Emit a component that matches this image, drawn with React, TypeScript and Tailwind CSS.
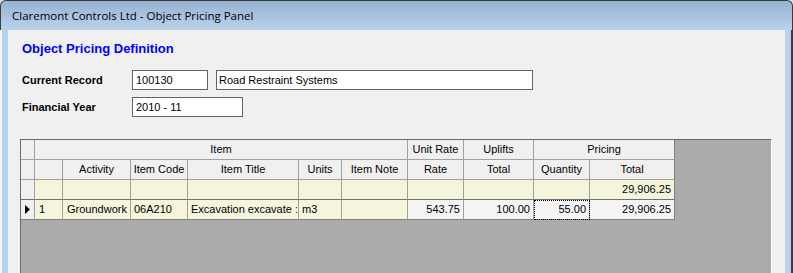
import React from "react";

const cols = "grid-cols-[14px_28px_68px_57px_111px_43px_66px_56px_70px_56px_85px]";

function Cell({
  children,
  className = "",
}: {
  children?: React.ReactNode;
  className?: string;
}) {
  return (
    <div
      className={
        "h-[20px] border-r border-b border-[#a0a0a0] flex items-center overflow-hidden whitespace-nowrap " +
        className
      }
    >
      {children}
    </div>
  );
}

export default function App() {
  const hdr = "bg-[#f0f0f0] justify-center";
  const beige = "bg-[#f5f5dc]";
  const num = "justify-end pr-[3px]";
  return (
    <div
      className="w-[793px] h-[273px] overflow-hidden flex flex-col bg-[#dcdcdc] text-black"
      style={{ fontFamily: '"Liberation Sans", Arial, sans-serif' }}
    >
      {/* title bar */}
      <div className="h-[30px] shrink-0 rounded-t-[6px] border-t border-l border-r border-[#3c3c3c] bg-gradient-to-b from-[#97b3d1] to-[#bad2ec] flex items-center pl-[11px]">
        <span className="text-[11.5px] text-black" style={{ fontFamily: '"Open Sans", "Noto Sans", sans-serif' }}>
          Claremont Controls Ltd - Object Pricing Panel
        </span>
      </div>
      {/* body */}
      <div className="flex flex-1 min-h-0">
        <div className="w-[8px] bg-[#b9d1ea] border-l-2 border-[#eef4fa]" />
        <div className="flex-1 bg-[#f0f0f0] flex flex-col pl-[12px] pr-[13px]">
          <div className="mt-[11px] pl-[2px] h-[16px] leading-[16px] text-[13px] font-bold text-[#0000ff]">
            Object Pricing Definition
          </div>
          <div className="mt-[13px] flex items-center h-[20px]">
            <div className="w-[112px] pl-[2px] text-[11px] font-bold">Current Record</div>
            <div className="w-[76px] h-[20px] border border-[#646464] bg-white text-[11px] flex items-center pl-[3px]">
              100130
            </div>
            <div className="ml-[8px] w-[317px] h-[20px] border border-[#646464] bg-white text-[11px] flex items-center pl-[2px]">
              Road Restraint Systems
            </div>
          </div>
          <div className="mt-[7px] flex items-center h-[20px]">
            <div className="w-[112px] pl-[2px] text-[11px] font-bold">Financial Year</div>
            <div className="w-[111px] h-[20px] border border-[#646464] bg-white text-[11px] flex items-center pl-[3px]">
              2010 - 11
            </div>
          </div>
          {/* grid area */}
          <div className="mt-[22px] flex-1 bg-[#ababab] border-l border-t border-[#6b6b6b] border-r border-r-white">
            <div className={"grid w-[654px] text-[11px] " + cols}>
              {/* header row 1 */}
              <Cell className={hdr} />
              <Cell className={hdr + " col-span-6"}>Item</Cell>
              <Cell className={hdr}>Unit Rate</Cell>
              <Cell className={hdr}>Uplifts</Cell>
              <Cell className={hdr + " col-span-2 border-r-[#808080]"}>Pricing</Cell>
              {/* header row 2 */}
              <Cell className={hdr} />
              <Cell className={hdr} />
              <Cell className={hdr}>Activity</Cell>
              <Cell className={hdr}>Item Code</Cell>
              <Cell className={hdr}>Item Title</Cell>
              <Cell className={hdr}>Units</Cell>
              <Cell className={hdr}>Item Note</Cell>
              <Cell className={hdr}>Rate</Cell>
              <Cell className={hdr}>Total</Cell>
              <Cell className={hdr}>Quantity</Cell>
              <Cell className={hdr + " border-r-[#808080]"}>Total</Cell>
              {/* summary row */}
              <Cell className="bg-[#f0f0f0] border-b-[#707070]" />
              <Cell className={beige + " border-b-[#707070]"} />
              <Cell className={beige + " border-b-[#707070]"} />
              <Cell className={beige + " border-b-[#707070]"} />
              <Cell className={beige + " border-b-[#707070]"} />
              <Cell className={beige + " border-b-[#707070]"} />
              <Cell className={beige + " border-b-[#707070]"} />
              <Cell className={beige + " border-b-[#707070]"} />
              <Cell className={beige + " border-b-[#707070]"} />
              <Cell className={beige + " border-b-[#707070]"} />
              <Cell className={beige + " border-b-[#707070] border-r-[#808080] " + num}>29,906.25</Cell>
              {/* data row */}
              <Cell className="bg-[#f0f0f0] border-b-[#808080] justify-start pl-[4px]">
                <svg width="5" height="9" viewBox="0 0 5 9">
                  <path d="M0 0 L5 4.5 L0 9 Z" fill="#000" />
                </svg>
              </Cell>
              <Cell className={beige + " border-b-[#808080] pl-[4px]"}>1</Cell>
              <Cell className={beige + " border-b-[#808080] pl-[4px]"}>Groundwork</Cell>
              <Cell className={beige + " border-b-[#808080] pl-[3px]"}>06A210</Cell>
              <Cell className={beige + " border-b-[#808080] pl-[3px]"}>
                <span className="block w-[106px] overflow-hidden">Excavation excavate :</span>
              </Cell>
              <Cell className={beige + " border-b-[#808080] pl-[3px]"}>m3</Cell>
              <Cell className={beige + " border-b-[#808080]"} />
              <Cell className={"bg-[#f4f4f4] border-b-[#808080] " + num}>543.75</Cell>
              <Cell className={"bg-[#f4f4f4] border-b-[#808080] " + num}>100.00</Cell>
              <Cell className={"bg-[#f4f4f4] border-b-[#808080] outline outline-1 outline-dotted outline-black -outline-offset-1 " + num}>
                55.00
              </Cell>
              <Cell className={"bg-[#f4f4f4] border-b-[#808080] border-r-[#808080] " + num}>29,906.25</Cell>
            </div>
          </div>
        </div>
        <div className="w-[8px] bg-[#b9d1ea] border-r-2 border-r-[#3c3c3c]" />
      </div>
    </div>
  );
}
